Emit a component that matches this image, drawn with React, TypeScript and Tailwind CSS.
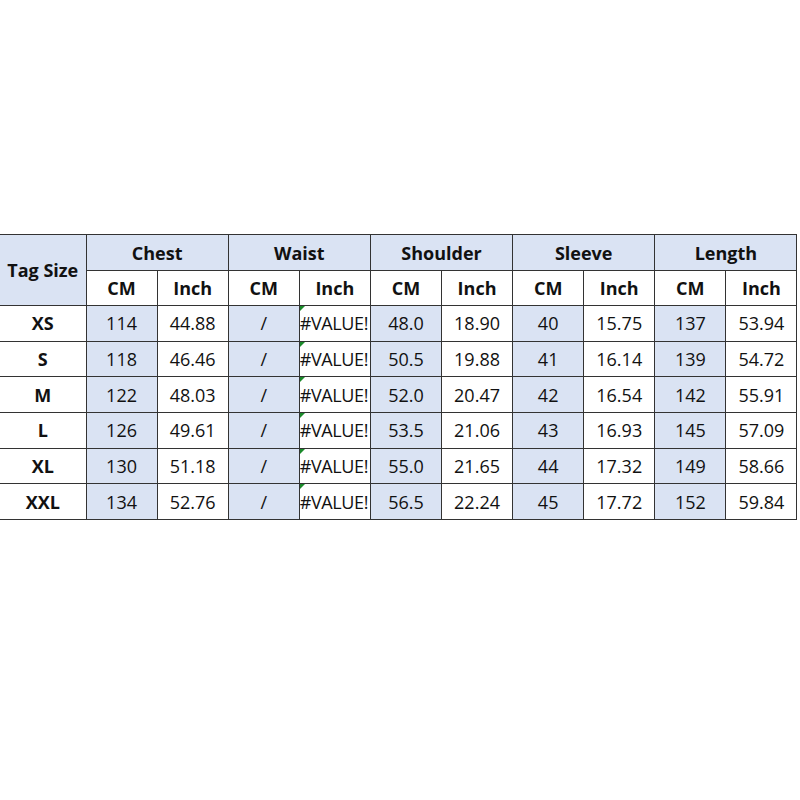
const groups = ["Chest", "Waist", "Shoulder", "Sleeve", "Length"];

const rows: { size: string; values: string[] }[] = [
  { size: "XS", values: ["114", "44.88", "/", "#VALUE!", "48.0", "18.90", "40", "15.75", "137", "53.94"] },
  { size: "S", values: ["118", "46.46", "/", "#VALUE!", "50.5", "19.88", "41", "16.14", "139", "54.72"] },
  { size: "M", values: ["122", "48.03", "/", "#VALUE!", "52.0", "20.47", "42", "16.54", "142", "55.91"] },
  { size: "L", values: ["126", "49.61", "/", "#VALUE!", "53.5", "21.06", "43", "16.93", "145", "57.09"] },
  { size: "XL", values: ["130", "51.18", "/", "#VALUE!", "55.0", "21.65", "44", "17.32", "149", "58.66"] },
  { size: "XXL", values: ["134", "52.76", "/", "#VALUE!", "56.5", "22.24", "45", "17.72", "152", "59.84"] },
];

const cell = "border border-[#333] text-center align-middle p-0";

export default function App() {
  return (
    <div className="w-[800px] h-[800px] bg-white pt-[234px] text-[#111]" style={{ fontFamily: '"Open Sans", "Noto Sans", sans-serif' }}>
      <table className="table-fixed border-collapse w-[797px] text-[18px] leading-none">
        <colgroup>
          <col className="w-[86px]" />
          {Array.from({ length: 10 }).map((_, i) => (
            <col key={i} className="w-[71.1px]" />
          ))}
        </colgroup>
        <thead>
          <tr className="h-[36px]">
            {/* Tag size spans both header rows */}
            <th rowSpan={2} className={`${cell} border-l-0 bg-[#dae3f3] font-bold`}>Tag Size</th>
            {groups.map((g) => (
              <th key={g} colSpan={2} className={`${cell} bg-[#dae3f3] font-bold`}>
                {g}
              </th>
            ))}
          </tr>
          <tr className="h-[35px]">
            {groups.map((g) => (
              <>
                <th key={g + "cm"} className={`${cell} font-bold`}>CM</th>
                <th key={g + "in"} className={`${cell} font-bold`}>Inch</th>
              </>
            ))}
          </tr>
        </thead>
        <tbody>
          {rows.map((r) => (
            <tr key={r.size} className="h-[35.7px]">
              <td className={`${cell} border-l-0 font-bold`}>{r.size}</td>
              {r.values.map((v, i) =>
                v === "#VALUE!" ? (
                  <td key={i} className={`${cell} relative text-left overflow-hidden whitespace-nowrap`}>
                    <span className="absolute left-0 top-0 w-0 h-0 border-t-[5px] border-r-[5px] border-t-[#1a8a2a] border-r-transparent" />
                    <span className="tracking-[-0.4px]">{v}</span>
                  </td>
                ) : (
                  <td key={i} className={`${cell} ${i % 2 === 0 ? "bg-[#dae3f3]" : ""}`}>
                    {v}
                  </td>
                )
              )}
            </tr>
          ))}
        </tbody>
      </table>
    </div>
  );
}
